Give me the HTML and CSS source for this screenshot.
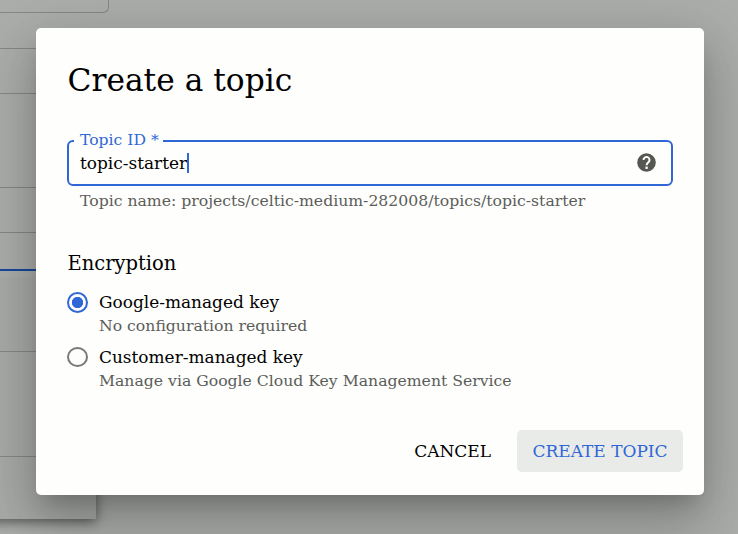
FILE: index.html
```html
<!DOCTYPE html>
<html lang="en">
<head>
<meta charset="utf-8">
<title>Create a topic</title>
<link rel="stylesheet" href="styles.css">
</head>
<body>
<div class="backdrop" aria-hidden="true">
  <div class="panel">
    <div class="row row-card"></div>
    <div class="row row-a"></div>
    <div class="row row-b"></div>
    <div class="row row-c"></div>
    <div class="row row-b"></div>
    <div class="row row-active"></div>
    <div class="row row-d"></div>
    <div class="row row-e"></div>
  </div>
</div>
<main class="dialog" role="dialog" aria-labelledby="title">
  <h1 class="title" id="title">Create a topic</h1>
  <div class="field">
    <span class="field-label">Topic ID *</span>
    <span class="field-value">topic-starter</span><span class="caret"></span>
    <svg class="help" viewBox="0 0 19 19">
      <circle cx="9.5" cy="9.5" r="9.3" fill="currentColor"/>
      <path d="M6.5 7a3 3 0 1 1 5.1 2.1C10.4 10.2 9.6 10.6 9.6 12.3" fill="none" stroke="#fefefc" stroke-width="2"/>
      <rect x="8.4" y="13.6" width="2.4" height="2.3" fill="#fefefc"/>
    </svg>
  </div>
  <p class="hint">Topic name: projects/celtic-medium-282008/topics/topic-starter</p>
  <h2 class="section">Encryption</h2>
  <div class="option">
    <span class="radio radio-on"></span>
    <div class="option-text">
      <div class="option-name">Google-managed key</div>
      <div class="option-note">No configuration required</div>
    </div>
  </div>
  <div class="option">
    <span class="radio radio-off"></span>
    <div class="option-text">
      <div class="option-name">Customer-managed key</div>
      <div class="option-note">Manage via Google Cloud Key Management Service</div>
    </div>
  </div>
  <div class="actions">
    <button class="button">CANCEL</button>
    <button class="button button-primary">CREATE TOPIC</button>
  </div>
</main>
</body>
</html>
```
FILE: styles.css
```css
* { box-sizing: border-box; }
body {
  margin: 0;
  width: 738px;
  height: 534px;
  overflow: hidden;
  position: relative;
  padding: 28px 34px 0 36px;
  background: #abaeaa;
  font-family: "DejaVu Serif", serif;
  color: #000;
}
.backdrop { position: absolute; inset: 0; z-index: 0; }
.panel {
  position: relative;
  width: 96px;
  height: 519px;
}
/* Shadow of the lower panel only; the upper part is flush with the page. */
.panel::before {
  content: "";
  position: absolute;
  inset: 277px 0 0 -20px;
  z-index: -1;
  background: #a8aba7;
  box-shadow: 0 3px 11px rgba(0, 0, 0, .5);
  clip-path: inset(0 -20px -20px 0);
}
.row { border-bottom: 1px solid #858884; }
.row-card { width: 109px; height: 13px; border-right: 1px solid #858884; border-radius: 0 0 6px 0; }
.row-a { height: 36px; }
.row-b { height: 45px; }
.row-c { height: 94px; }
.row-active { height: 38px; border-bottom: 2px solid #17479d; }
.row-d { height: 81px; }
.row-e { height: 105px; }
.dialog {
  position: relative;
  z-index: 1;
  width: 668px;
  height: 467px;
  padding: 30px 21px 23px 31px;
  display: flex;
  flex-direction: column;
  background: #fefefc;
  border-radius: 5px;
  box-shadow: 0 14px 20px -9px rgba(0, 0, 0, .2), 0 31px 50px 4px rgba(0, 0, 0, .14), 0 12px 60px 10px rgba(0, 0, 0, .12);
}
.title { margin: 0 0 38px .5px; font-size: 31.3px; line-height: 44px; font-weight: 400; }
.field {
  position: relative;
  width: 606px;
  height: 46px;
  display: flex;
  align-items: center;
  padding: 0 15px 0 11px;
  border: 2px solid #3067d6;
  border-radius: 6px;
}
.field-label {
  position: absolute;
  left: 5px;
  top: -12px;
  padding: 0 4px 0 6px;
  background: #fefefc;
  color: #3067d6;
  font-size: 15.64px;
  line-height: 20px;
}
.field-value { font-size: 16.95px; }
.caret { width: 2px; height: 20px; background: #3067d6; }
.help { width: 19px; height: 19px; margin: 0 0 2px auto; color: #555753; }
.hint { margin: 5px 0 0 13px; font-size: 15.66px; line-height: 20px; color: #5b5d5a; }
.section { margin: 40px 0 13px .5px; font-size: 19.5px; line-height: 26px; font-weight: 400; }
.option { display: flex; height: 55px; gap: 11px; }
.radio { flex: none; width: 21px; height: 21px; margin-top: 2px; border: 2px solid #777976; border-radius: 50%; }
.radio-on { border-color: #3067d6; background: radial-gradient(circle, #3067d6 5.3px, transparent 6px); }
.radio-off { height: 20px; }
.option-name { font-size: 16.95px; line-height: 24px; }
.option-note { font-size: 15.66px; line-height: 24px; color: #5b5d5a; }
.actions { display: flex; justify-content: flex-end; gap: 10px; margin-top: auto; }
.button {
  height: 42px;
  padding: 0 16px;
  border: 0;
  border-radius: 5px;
  background: transparent;
  color: #000;
  font-family: inherit;
  font-size: 17px;
}
.button-primary { width: 166px; padding: 0; background: #e9ebe8; color: #3067d6; }
```
